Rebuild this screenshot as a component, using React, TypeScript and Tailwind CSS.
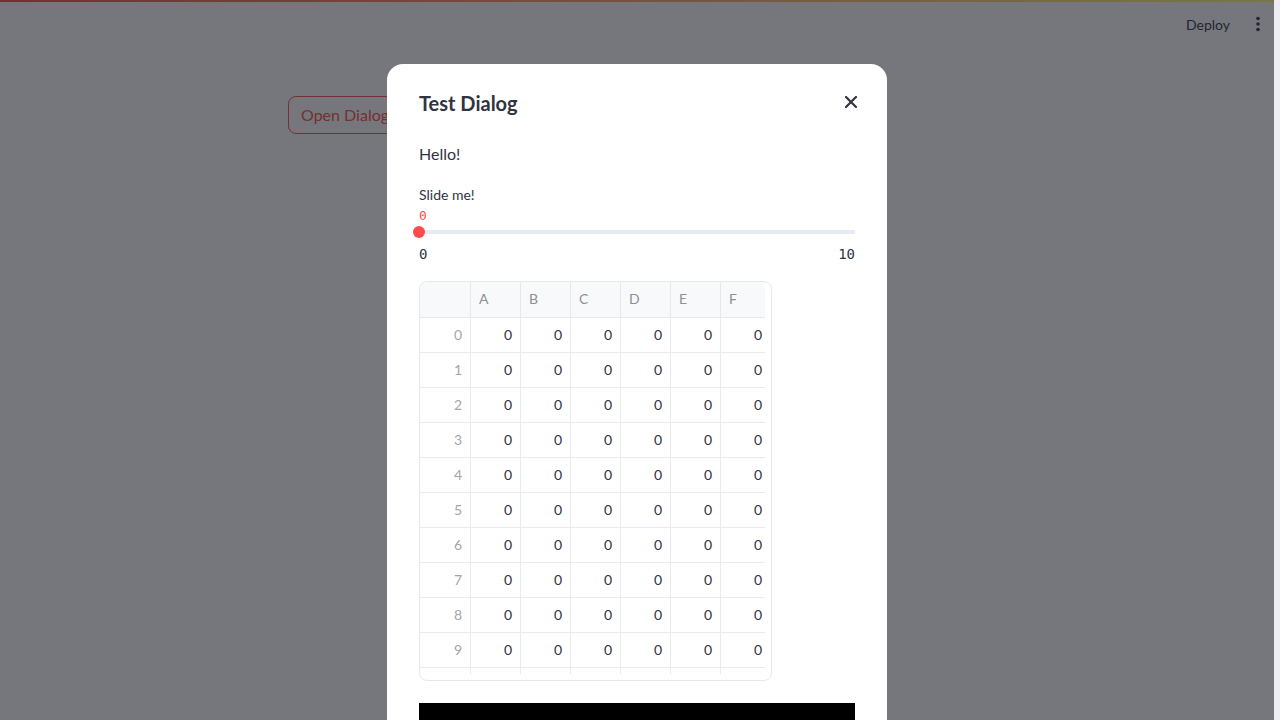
import React from "react";

const cols = ["A", "B", "C", "D", "E", "F"];
const rows = Array.from({ length: 11 }, (_, i) => i);

export default function App() {
  return (
    <div
      className="relative w-[1280px] h-[720px] overflow-hidden bg-white flex"
      style={{ fontFamily: 'Lato, "Noto Sans", sans-serif' }}
    >
      {/* page */}
      <div className="flex-1 flex flex-col">
        <div className="h-[2px] w-full bg-[linear-gradient(90deg,#ff4b4b,#fffd80)]" />
        <div className="h-[44px] flex items-center justify-end pr-[8px] gap-[20px]">
          <span className="text-[14px] text-[#31333f]">Deploy</span>
          <svg width="16" height="16" viewBox="0 0 16 16" className="text-[#31333f]">
            <circle cx="8" cy="2.5" r="1.8" fill="currentColor" />
            <circle cx="8" cy="8" r="1.8" fill="currentColor" />
            <circle cx="8" cy="13.5" r="1.8" fill="currentColor" />
          </svg>
        </div>
        <div className="pl-[288px] pt-[50px]">
          <button className="h-[38px] px-[12px] rounded-[8px] border border-[#ff4b4b] text-[#ff4b4b] text-[16px] bg-white">
            Open Dialog
          </button>
        </div>
      </div>
      <div className="w-[6px] h-full bg-[#ededf3]" />

      {/* overlay */}
      <div className="absolute top-0 left-0 bottom-0 right-[6px] bg-[rgba(26,28,36,0.6)] flex justify-center">
        <div className="mt-[64px] w-[500px] h-[700px] bg-white rounded-[16px] px-[32px] pt-[24px] text-[#31333f]">
          <div className="h-[30px] flex items-center justify-between">
            <span className="text-[20px] font-bold">Test Dialog</span>
            <svg width="12" height="12" viewBox="0 0 12 12" className="mr-[-2px] mt-[-2px]">
              <path d="M1 1L11 11M11 1L1 11" stroke="#31333f" strokeWidth="2.2" strokeLinecap="round" />
            </svg>
          </div>
          <div className="mt-[24px] h-[24px] flex items-center text-[16px]">Hello!</div>
          <div className="mt-[18px] h-[20px] flex items-center text-[14px]">Slide me!</div>
          <div
            className="mt-[4px] h-[16px] flex items-center text-[13px] text-[#ff4b4b]"
            style={{ fontFamily: '"DejaVu Sans Mono", monospace' }}
          >
            0
          </div>
          <div className="h-[16px] relative flex items-center">
            <div className="w-full h-[4px] rounded-full bg-[#e6eaf1]" />
            <div className="absolute left-[-6px] top-[2px] w-[12px] h-[12px] rounded-full bg-[#ff4b4b]" />
          </div>
          <div
            className="mt-[4px] h-[20px] flex items-center justify-between text-[14px]"
            style={{ fontFamily: '"DejaVu Sans Mono", monospace' }}
          >
            <span>0</span>
            <span>10</span>
          </div>
          <div className="mt-[17px] w-[353px] h-[400px] border border-[#e6e8ec] rounded-[8px] overflow-hidden">
            <div className="w-[345px] h-[392px] overflow-hidden text-[14px]">
              <div className="flex h-[36px] bg-[#f8f9fb] border-b border-[#e6e8ec]">
                <div className="w-[51px] shrink-0 border-r border-[#e6e8ec]" />
                {cols.map((c) => (
                  <div
                    key={c}
                    className="w-[50px] shrink-0 border-r border-[#e6e8ec] flex items-center pl-[8px] pb-[2px] text-[#8d9096]"
                  >
                    {c}
                  </div>
                ))}
              </div>
              {rows.map((r) => (
                <div key={r} className="flex h-[35px] border-b border-[#e9ebee]">
                  <div className="w-[51px] shrink-0 border-r border-[#e9ebee] flex items-center justify-end pr-[8px] pb-[2px] text-[#a3a6ab]">
                    {r < 10 ? r : ""}
                  </div>
                  {cols.map((c) => (
                    <div
                      key={c}
                      className="w-[50px] shrink-0 border-r border-[#e9ebee] flex items-center justify-end pr-[8px] pb-[2px] text-[#31333f]"
                    >
                      {r < 10 ? "0" : ""}
                    </div>
                  ))}
                </div>
              ))}
            </div>
          </div>
          <div className="mt-[22px] h-[300px] w-full bg-black" />
        </div>
      </div>
    </div>
  );
}
